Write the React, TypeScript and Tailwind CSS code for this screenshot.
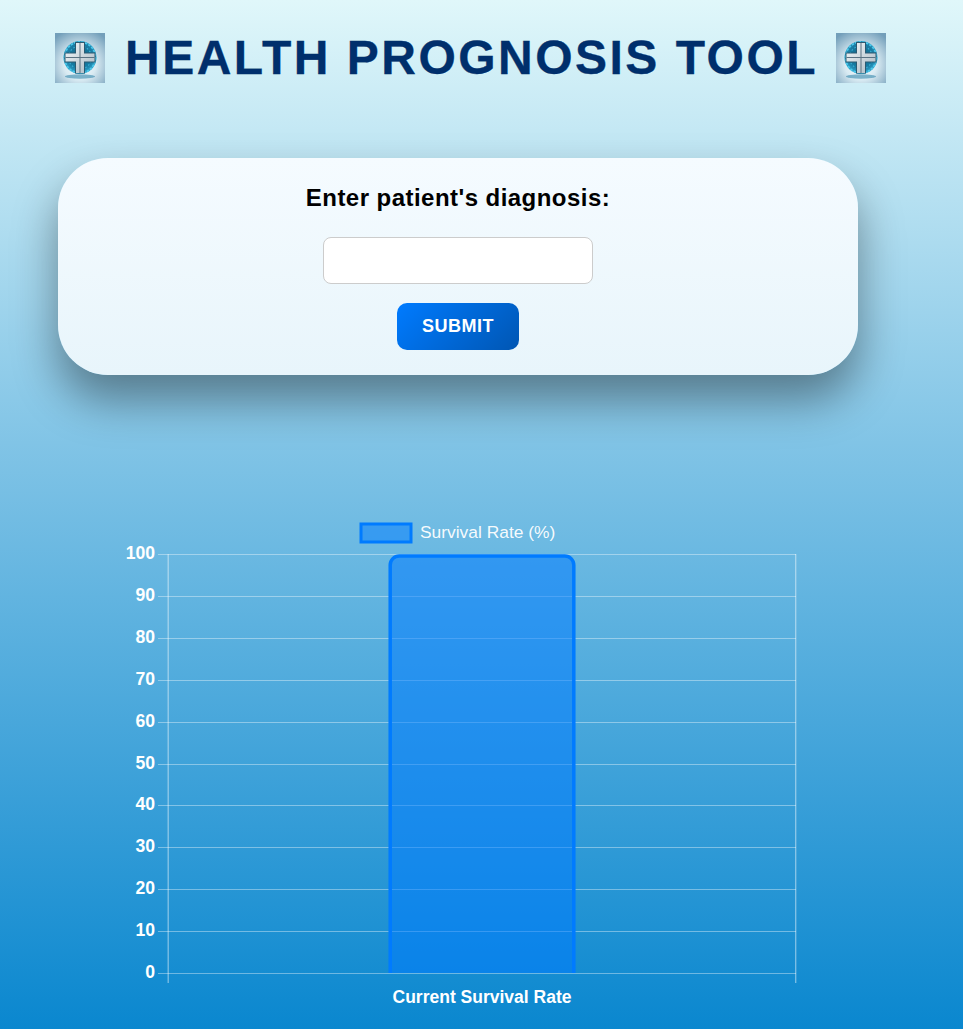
const ticks = [100, 90, 80, 70, 60, 50, 40, 30, 20, 10, 0];

function Emblem({ id }: { id: string }) {
  return (
    <svg width="50" height="50" viewBox="0 0 50 50" className="shrink-0">
      <defs>
        <radialGradient id={`${id}bg`} cx="50%" cy="62%" r="72%">
          <stop offset="0%" stopColor="#ffffff" />
          <stop offset="45%" stopColor="#d8eaf2" />
          <stop offset="100%" stopColor="#739fba" />
        </radialGradient>
        <radialGradient id={`${id}ball`} cx="50%" cy="45%" r="55%">
          <stop offset="0%" stopColor="#135f7e" />
          <stop offset="70%" stopColor="#1a7ea6" />
          <stop offset="100%" stopColor="#35aad0" />
        </radialGradient>
        <linearGradient id={`${id}cross`} x1="0" y1="0" x2="1" y2="1">
          <stop offset="0%" stopColor="#f4f8fa" />
          <stop offset="100%" stopColor="#a9b8c2" />
        </linearGradient>
        <filter id={`${id}soft`} x="-10%" y="-10%" width="120%" height="120%">
          <feGaussianBlur stdDeviation="0.6" />
        </filter>
      </defs>
      <rect width="50" height="50" fill={`url(#${id}bg)`} />
      <g filter={`url(#${id}soft)`}>
        <ellipse cx="25" cy="43.5" rx="15" ry="2.2" fill="#2a7fa6" opacity="0.55" />
        <circle cx="25" cy="24.5" r="16.5" fill={`url(#${id}ball)`} />
        <circle cx="25" cy="24.5" r="15.5" fill="none" stroke="#4cc8ea" strokeWidth="1.8" strokeDasharray="2.4 1.3" />
        <circle cx="25" cy="24.5" r="11.5" fill="none" stroke="#3bb0d4" strokeWidth="1.1" strokeDasharray="1.6 2" />
        <path d="M20 9h10v10.500h10.500v10H30V40.500H20V29.500H9.500v-10H20z" fill="#2a5a72" />
        <path d="M21 10h8v10.500h10.500v8H29V40h-8V28.500H10.500v-8H21z" fill={`url(#${id}cross)`} />
        <path d="M24.500 10h1v30h-1zM10.500 24h29v1h-29z" fill="#5a7282" />
      </g>
    </svg>
  );
}

function Chart() {
  const y = (v: number) => Math.round(973 - (v * 419) / 100);
  return (
    <svg
      width="963"
      height="529"
      viewBox="0 500 963 529"
      className="block"
      style={{ fontFamily: '"Liberation Sans", Arial, sans-serif' }}
    >
      <rect x="361" y="524" width="50" height="18" fill="#007bff" fillOpacity="0.5" stroke="#007bff" strokeWidth="3" />
      <text x="420" y="537.5" fontSize="17.4" fill="#ffffff" fillOpacity="0.95">Survival Rate (%)</text>
      {ticks.map((t) => (
        <g key={t}>
          <line x1="158" x2="796" y1={y(t) + 0.5} y2={y(t) + 0.5} stroke="#ffffff" strokeOpacity="0.38" strokeWidth="1.2" />
          <text x="155" y={y(t) + 4.5} textAnchor="end" fontSize="17.6" fontWeight="700" fill="#ffffff">{t}</text>
        </g>
      ))}
      <line x1="168.2" x2="168.2" y1="554" y2="983" stroke="#ffffff" strokeOpacity="0.45" strokeWidth="1.3" />
      <line x1="795.7" x2="795.7" y1="554" y2="983" stroke="#ffffff" strokeOpacity="0.45" strokeWidth="1.3" />
      <path d="M390.2 973V565a9 9 0 0 1 9-9h165.6a9 9 0 0 1 9 9v408z" fill="#007bff" fillOpacity="0.52" />
      <path d="M390.2 973V565a9 9 0 0 1 9-9h165.6a9 9 0 0 1 9 9v408" fill="none" stroke="#007bff" strokeWidth="3.5" />
      <text x="482" y="1002.500" textAnchor="middle" fontSize="17.5" fontWeight="700" fill="#ffffff">Current Survival Rate</text>
    </svg>
  );
}

export default function App() {
  return (
    <div className="h-[1029px] overflow-hidden bg-[linear-gradient(to_bottom,#e0f7fa,#81c4e6_43%,#0a87cf)] font-['Liberation_Sans',Arial,sans-serif]">
      <header className="flex h-[116px] items-start pl-[55px] pt-[33px]">
        <Emblem id="a" />
        <h1 className="ml-[20px] mr-[18px] whitespace-nowrap text-[48px] font-bold leading-[50px] tracking-[2.48px] text-[#002f6c] [-webkit-text-stroke:0.3px_#002f6c]">HEALTH PROGNOSIS TOOL</h1>
        <Emblem id="b" />
      </header>
      <section className="ml-[58px] mt-[42px] flex h-[217px] w-[800px] flex-col items-center rounded-[50px] bg-[linear-gradient(to_bottom,#f5fbff,#e8f5fb)] pt-[26px] shadow-[0_25px_45px_rgba(0,0,0,0.4)]">
        <h2 className="text-[24px] font-bold leading-[28px] tracking-[0.46px] text-black">Enter patient's diagnosis:</h2>
        <input aria-label="diagnosis" className="mt-[25px] h-[47px] w-[270px] rounded-[8px] border border-[#cccccc] bg-white" />
        <button className="mt-[19px] h-[47px] w-[122px] rounded-[10px] bg-[linear-gradient(135deg,#007bff,#0056b3)] pb-[1px] text-[18px] font-bold tracking-[0.5px] text-white">SUBMIT</button>
      </section>
      <div className="mt-[125px]">
        <Chart />
      </div>
    </div>
  );
}
